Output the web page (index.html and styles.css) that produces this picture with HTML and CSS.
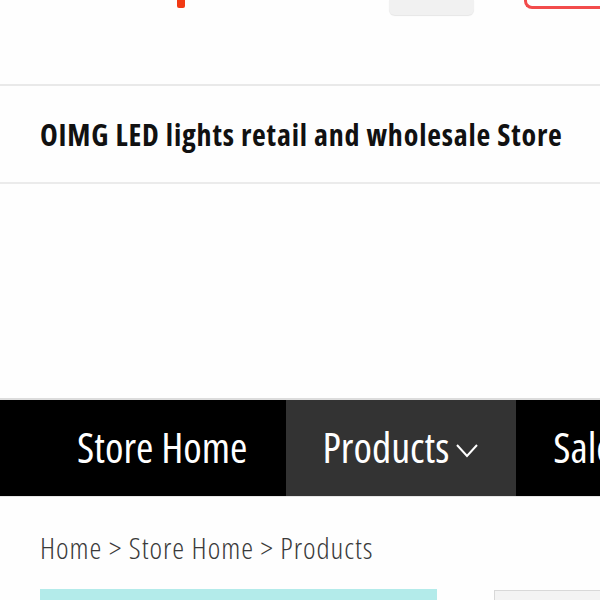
FILE: index.html
```html
<!DOCTYPE html>
<html>
<head>
<meta charset="utf-8">
<link rel="stylesheet" href="styles.css">
</head>
<body>
<div class="page">
  <header class="topbar">
    <div class="logo-stub"></div>
    <div class="btn-grey"></div>
    <div class="btn-red"></div>
  </header>
  <div class="store-band">
    <h1 class="store-name">OIMG LED lights retail and wholesale Store</h1>
  </div>
  <div class="banner"></div>
  <nav class="nav">
    <a class="nav-item home">Store Home</a>
    <a class="nav-item active">Products<svg class="chev" viewBox="0 0 22 14" width="22" height="14"><path d="M1 1 L11 12 L21 1" fill="none" stroke="#fff" stroke-width="2"/></svg></a>
    <a class="nav-item sale">Sale Items</a>
  </nav>
  <div class="crumbs">Home &gt; Store Home &gt; Products</div>
  <div class="content">
    <div class="side-block"></div>
    <div class="grey-box"></div>
  </div>
</div>
</body>
</html>
```
FILE: styles.css
```css
html, body {
  margin: 0;
  padding: 0;
  background: #fefefe;
  overflow: hidden;
}
.page {
  width: 600px;
  height: 600px;
  overflow: hidden;
  font-family: "Open Sans", "Liberation Sans", sans-serif;
  font-stretch: 75%;
}
.topbar {
  height: 84px;
  border-bottom: 2px solid #e9e9e9;
  display: flex;
  align-items: flex-start;
}
.logo-stub {
  flex-shrink: 0;
  width: 8px;
  height: 8px;
  margin-left: 177px;
  background: #f23a14;
  border-radius: 0 0 2px 2px;
}
.btn-grey {
  flex-shrink: 0;
  width: 85px;
  height: 15px;
  margin-left: 204px;
  background: #f1f1f1;
  border-radius: 0 0 6px 6px;
  box-shadow: 0 1px 1px #e6e6e6;
}
.btn-red {
  flex: 1;
  height: 6px;
  margin-left: 50px;
  border: 3px solid #f24b4b;
  border-top: none;
  border-right: none;
  border-radius: 0 0 0 8px;
}
.store-band {
  height: 96px;
  border-bottom: 2px solid #ebebeb;
  display: flex;
  align-items: center;
}
.store-name {
  margin: 0 0 0 40px;
  font-size: 30px;
  font-weight: 700;
  letter-spacing: 0.8px;
  color: #111;
  white-space: nowrap;
}
.banner {
  height: 214px;
  border-bottom: 2px solid #dcdcdc;
}
.nav {
  height: 96px;
  background: #000;
  display: flex;
  align-items: stretch;
  border-bottom: 1px solid #e6e6e6;
  overflow: hidden;
}
.nav-item {
  flex-shrink: 0;
  color: #fff;
  font-size: 42px;
  display: flex;
  align-items: center;
  white-space: nowrap;
}
.home {
  padding: 0 39px 3px 77px;
}
.active {
  background: #333;
  padding: 0 38px 3px 36px;
}
.chev {
  margin-left: 7px;
  margin-top: 8px;
}
.sale {
  padding: 0 0 3px 37px;
}
.crumbs {
  margin: 34px 0 0 40px;
  font-size: 30px;
  color: #3a3a3a;
  font-weight: 300;
  letter-spacing: 0.95px;
  line-height: 34px;
  white-space: nowrap;
}
.content {
  display: flex;
  margin-top: 24px;
  padding-left: 40px;
}
.side-block {
  flex-shrink: 0;
  width: 397px;
  height: 20px;
  background: #b3ebea;
}
.grey-box {
  flex-shrink: 0;
  width: 120px;
  height: 20px;
  margin-left: 57px;
  margin-top: 1px;
  background: #f3f3f3;
  border: 1px solid #d8d8d8;
}
```
